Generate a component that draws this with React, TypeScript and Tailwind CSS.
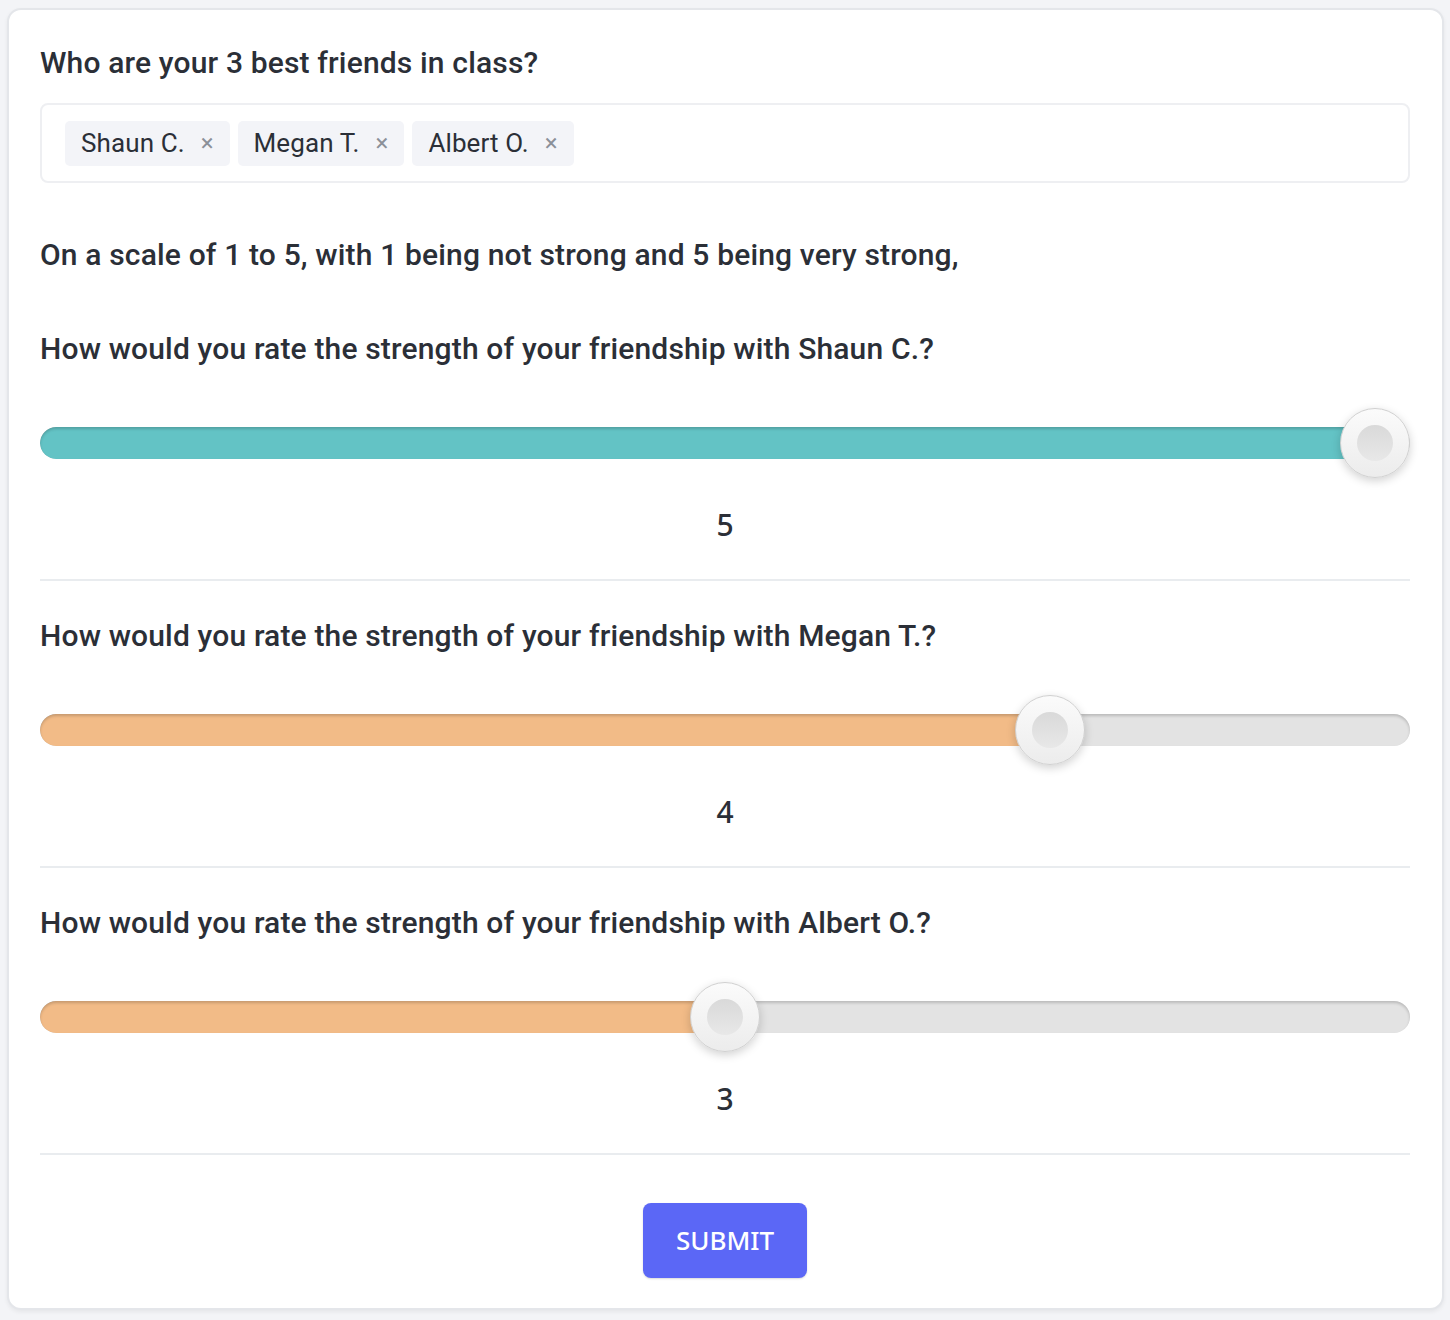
import React from "react";

const friends = ["Shaun C.", "Megan T.", "Albert O."];
const ratings = [
  { name: "Shaun C.", value: 5 },
  { name: "Megan T.", value: 4 },
  { name: "Albert O.", value: 3 },
];

function Slider({ value }: { value: number }) {
  const frac = (value - 1) / 4;
  const fill = value === 5 ? "bg-[#63c3c5]" : "bg-[#f2bb87]";
  return (
    <div className="relative flex h-[70px] items-center">
      <div className="relative h-8 w-full overflow-hidden rounded-full bg-[#e3e3e3] shadow-[inset_0_2px_3px_rgba(0,0,0,0.18)]">
        <div
          className={`h-full rounded-l-full ${fill} shadow-[inset_0_2px_3px_rgba(0,0,0,0.18)]`}
          style={{ width: `calc((100% - 70px) * ${frac} + 35px)` }}
        />
      </div>
      <div
        className="absolute top-0 flex size-[70px] items-center justify-center rounded-full border border-[#d0d0d0] bg-gradient-to-b from-[#fbfbfb] to-[#ececec] shadow-[0_3px_10px_rgba(0,0,0,0.18)]"
        style={{ left: `calc((100% - 70px) * ${frac})` }}
      >
        <div className="size-9 rounded-full bg-gradient-to-b from-[#d9d9d9] to-[#e8e8e8]" />
      </div>
    </div>
  );
}

export default function App() {
  return (
    <div className="min-h-[1320px] bg-[#f3f4f7] pl-[7px] pr-[6px] pt-[8px] font-['Roboto',sans-serif] text-[#2b2f37]">
      <div className="w-[1437px] rounded-[14px] border-2 border-[#e4e6ea] bg-white px-[31px] pb-[30px] pt-[35px] shadow-[0_2px_4px_rgba(0,0,0,0.06)]">
        <h2 className="h-9 text-[30px] font-medium leading-9 tracking-[0.16px]">
          Who are your 3 best friends in class?
        </h2>
        <div className="mt-[22px] flex h-20 w-[1370px] items-center gap-2 rounded-lg border-2 border-[#eeeff2] pl-[23px]">
          {friends.map(f => (
            <div
              key={f}
              className="flex h-[45px] items-center gap-4 rounded-[5px] bg-[#f3f4f8] pl-4 pr-4 text-[26px] tracking-[0.1px]"
            >
              <span>{f}</span>
              <span className="text-[24px] text-[#8b9099]">×</span>
            </div>
          ))}
        </div>

        <p className="mt-[54px] h-9 text-[30px] font-medium leading-9 tracking-[0.16px]">
          On a scale of 1 to 5, with 1 being not strong and 5 being very strong,
        </p>

        {ratings.map((r, i) => (
          <div key={r.name} className="w-[1370px]">
            <p
              className={`${i === 0 ? "mt-[58px]" : "mt-[37px]"} h-9 text-[30px] font-medium leading-9 tracking-[0.16px]`}
            >
              How would you rate the strength of your friendship with {r.name}?
            </p>
            <div className="mt-[41px]">
              <Slider value={r.value} />
            </div>
            <div className="mt-[29px] h-9 text-center font-['Noto_Sans',sans-serif] text-[30px] font-medium leading-9">
              {r.value}
            </div>
            <div className="mt-9 h-0.5 bg-[#e9ecef]" />
          </div>
        ))}

        <div className="mt-12 flex w-[1370px] justify-center">
          <button className="h-[75px] w-[164px] rounded-lg bg-[#5b67f6] font-['Noto_Sans',sans-serif] text-[26px] font-medium text-white shadow-[0_1px_2px_rgba(0,0,0,0.15)]">
            SUBMIT
          </button>
        </div>
      </div>
    </div>
  );
}
